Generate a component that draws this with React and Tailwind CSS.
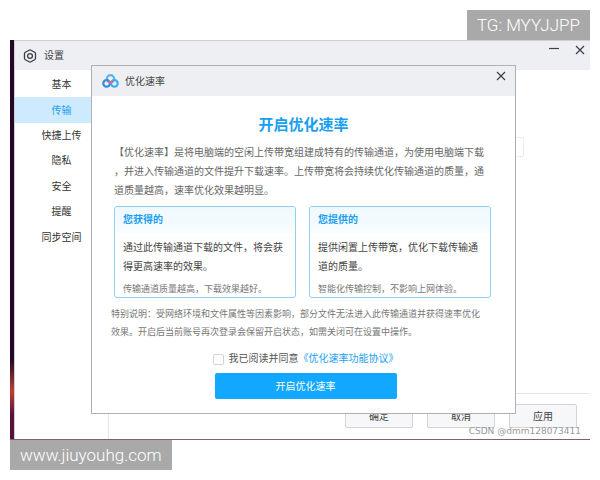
import { useState } from 'react';

const tabs = ['基本', '传输', '快捷上传', '隐私', '安全', '提醒', '同步空间'];

const cards = [
  {
    title: '您获得的',
    lines: ['通过此传输通道下载的文件，将会获', '得更高速率的效果。'],
    note: '传输通道质量越高，下载效果越好。',
  },
  {
    title: '您提供的',
    lines: ['提供闲置上传带宽，优化下载传输通', '道的质量。'],
    note: '智能化传输控制，不影响上网体验。',
  },
];

function SettingsIcon() {
  return (
    <svg viewBox="0 0 14 14" className="size-[14px]" fill="none" stroke="#3c3f45" strokeWidth="1.3" strokeLinejoin="round">
      <path d="M6.1 1.2Q7 .7 7.9 1.2L11.7 3.3Q12.5 3.8 12.5 4.7V9.3Q12.5 10.2 11.7 10.7L7.9 12.8Q7 13.3 6.1 12.8L2.3 10.7Q1.5 10.2 1.5 9.3V4.7Q1.5 3.8 2.3 3.3Z" />
      <circle cx="7" cy="7" r="2.4" />
    </svg>
  );
}

function CloudLogo() {
  return (
    <svg viewBox="0 0 17 14" className="w-[17px] h-[14px]" fill="none" strokeWidth="2.2">
      <circle cx="8.5" cy="4.8" r="3.6" stroke="#5bb4f2" />
      <circle cx="4.6" cy="9.4" r="3.3" stroke="#2f8be0" />
      <circle cx="12.4" cy="9.4" r="3.3" stroke="#35b0f2" />
      <path d="M5.9 7.3A3.6 3.6 0 0 0 11.1 7.3" stroke="#e4687a" />
    </svg>
  );
}

function CloseIcon() {
  return (
    <svg viewBox="0 0 10 10" className="size-[10px]" stroke="#3c3f45" strokeWidth="1.2">
      <path d="M1 1l8 8M9 1L1 9" />
    </svg>
  );
}

// 弹窗
function SpeedDialog() {
  const [agreed, setAgreed] = useState(false);

  return (
    <section
      role="dialog"
      aria-labelledby="dialog-title"
      className="absolute top-[25px] left-[81px] right-[74px] z-10 border border-[#aeb0b2] bg-white"
    >
      <header className="flex h-[30px] items-center bg-[#edeff3] pl-[10px] pr-[9px]">
        <CloudLogo />
        <h2 id="dialog-title" className="ml-[6px] flex-1 text-[10px] text-[#444]">优化速率</h2>
        <button type="button" aria-label="关闭" className="mb-[10px]">
          <CloseIcon />
        </button>
      </header>

      <div className="px-[22px] pt-[18px] pb-[14px]">
        <h1 className="text-center text-[15px] leading-[22px] font-bold text-[#1a9ff0]">开启优化速率</h1>

        <p className="mt-[7px] text-[10px] leading-[19px] whitespace-nowrap text-[#666]">
          【优化速率】是将电脑端的空闲上传带宽组建成特有的传输通道，为使用电脑端下载
          <br />
          ，并进入传输通道的文件提升下载速率。上传带宽将会持续优化传输通道的质量，通
          <br />
          道质量越高，速率优化效果越明显。
        </p>

        <div className="mt-[6px] mr-[2px] grid grid-cols-2 gap-[13px]">
          {cards.map((card) => (
            <article key={card.title} className="rounded-[3px] border border-[#8fd0ee] whitespace-nowrap">
              <h3 className="rounded-t-[3px] bg-linear-to-b from-[#eef9ff] to-[#f8fdff] px-2 text-[10px] leading-[26px] font-bold text-[#1a9ff0]">
                {card.title}
              </h3>
              <p className="px-2 pt-[5px] text-[10px] leading-[19px] text-[#444]">
                {card.lines[0]}
                <br />
                {card.lines[1]}
              </p>
              <p className="px-2 pt-[5px] text-[9px] leading-[16px] text-[#777]">{card.note}</p>
            </article>
          ))}
        </div>

        <p className="-mx-[3px] mt-[7px] text-[9px] leading-[18px] whitespace-nowrap text-[#777]">
          特别说明：受网络环境和文件属性等因素影响，部分文件无法进入此传输通道并获得速率优化
          <br />
          效果。开启后当前账号再次登录会保留开启状态，如需关闭可在设置中操作。
        </p>

        <div className="mt-[8px] flex flex-col items-center gap-[4px] pl-1">
          <div className="flex items-center text-[10px] leading-[20px]">
            <input
              id="agree"
              type="checkbox"
              checked={agreed}
              onChange={(e) => setAgreed(e.target.checked)}
              className="mr-[5px] size-[11px] appearance-none rounded-[2px] border border-[#d4d4d4] bg-white checked:bg-[#12a8ff]"
            />
            <label htmlFor="agree" className="text-[#555]">我已阅读并同意</label>
            <a href="#agreement" className="text-[#1a9ff0]">《优化速率功能协议》</a>
          </div>
          <button type="button" className="h-[26px] w-[182px] rounded-[2px] bg-[#12a8ff] text-[10px] text-white">
            开启优化速率
          </button>
        </div>
      </div>
    </section>
  );
}

export default function App() {
  const [active, setActive] = useState('传输');

  return (
    <div className="flex min-h-screen flex-col bg-white p-[10px] font-['Liberation_Sans','Noto_Sans_CJK_SC',sans-serif]">
      <div className="self-end bg-[#a9a9a9] px-[10px] font-['Roboto',sans-serif] text-[17px] leading-[30px] font-light text-white">
        TG: MYYJJPP
      </div>

      <div className="relative flex flex-1 flex-col border-b border-[#8e5a70] bg-linear-to-b from-[#240626] from-80% via-[#c0402c] via-88% to-[#55123a] to-94% pl-[4px]">
        <main className="flex flex-1 flex-col border-t border-l border-[#d0d0d4] bg-white">
          <header className="flex h-[29px] items-center bg-[#edeff3] pl-[8px] pr-[5px]">
            <SettingsIcon />
            <span className="ml-[7px] flex-1 text-[10px] text-[#444]">设置</span>
            <div className="mb-[12px] flex items-center gap-[16px]">
              <button type="button" aria-label="最小化">
                <svg viewBox="0 0 10 10" className="size-[10px]" stroke="#3c3f45" strokeWidth="1.2">
                  <path d="M0 3.5h10" />
                </svg>
              </button>
              <button type="button" aria-label="关闭">
                <CloseIcon />
              </button>
            </div>
          </header>

          <div className="flex flex-1">
            <nav className="w-[94px] border-r border-[#e6e6e8] pt-[2px]">
              <div className="flex h-[178px] flex-col">
                {tabs.map((tab) => (
                  <button
                    key={tab}
                    type="button"
                    onClick={() => setActive(tab)}
                    className={`flex-1 text-[10px] ${tab === active ? 'bg-[#cdeaff] text-[#1a9ff0]' : 'text-[#333]'}`}
                  >
                    {tab}
                  </button>
                ))}
              </div>
            </nav>

            <div className="flex flex-1 flex-col">
              <div className="flex flex-1 items-start pt-[67px] pr-[66px]">
                <input aria-label="下载位置" className="h-[20px] w-full rounded-[2px] border border-[#ececec]" />
              </div>
              <div className="flex justify-end gap-[14px] border-t border-[#e6e6e8] pt-[10px] pr-[13px] pb-[11px]">
                {['确定', '取消', '应用'].map((label) => (
                  <button
                    key={label}
                    type="button"
                    className="h-[24px] w-[68px] rounded-[2px] border border-[#d4d4d6] bg-[#f6f7f8] text-[10px] text-[#444]"
                  >
                    {label}
                  </button>
                ))}
              </div>
            </div>
          </div>
        </main>

        <SpeedDialog />
        <span className="absolute right-[9px] bottom-px z-20 font-['DejaVu_Sans',sans-serif] text-[9px] leading-[14px] text-[#999]">
          CSDN @dmm128073411
        </span>
      </div>

      <div className="self-start bg-[#a9a9a9] px-[10px] font-['Roboto',sans-serif] text-[17px] leading-[30px] font-light text-white">
        www.jiuyouhg.com
      </div>
    </div>
  );
}
